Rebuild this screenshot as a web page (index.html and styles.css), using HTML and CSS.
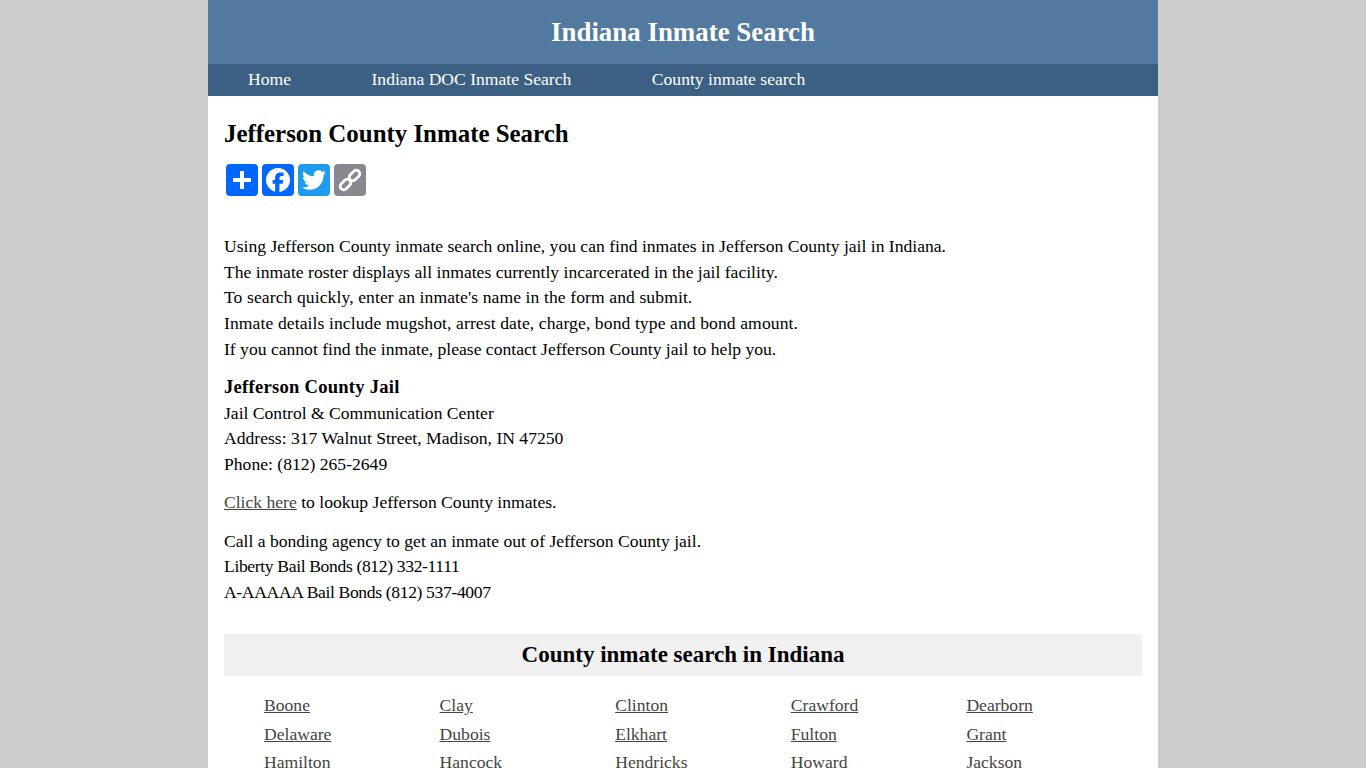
FILE: index.html
```html
<!DOCTYPE html>
<html lang="en">

<head>
  <meta charset="UTF-8" />
  <title>Jefferson County Inmate Search</title>
  <link rel="stylesheet" href="styles.css">
</head>

<body>
  <div class="wrapper">
    <header class="site-title">Indiana Inmate Search</header>
    <nav class="topnav">
      <a href="#">Home</a>
      <a href="#">Indiana DOC Inmate Search</a>
      <a href="#">County inmate search</a>
    </nav>

    <main class="content">
      <h1>Jefferson County Inmate Search</h1>

      <div class="share">
        <a class="share-btn share-add" href="#" title="Share">
          <svg viewBox="0 0 32 32"><path fill="#fff" d="M14 7h4v18h-4z"/><path fill="#fff" d="M7 14h18v4H7z"/></svg>
        </a>
        <a class="share-btn share-fb" href="#" title="Facebook">
          <svg viewBox="0 0 32 32"><path fill="#fff" d="M28 16c0-6.627-5.373-12-12-12S4 9.373 4 16c0 5.628 3.875 10.35 9.101 11.647v-7.98h-2.474V16H13.1v-1.58c0-4.085 1.849-5.978 5.859-5.978.76 0 2.072.15 2.608.298v3.325c-.283-.03-.775-.045-1.386-.045-1.967 0-2.728.745-2.728 2.683V16h3.92l-.673 3.667h-3.247v8.245C23.395 27.195 28 22.135 28 16Z"/></svg>
        </a>
        <a class="share-btn share-tw" href="#" title="Twitter">
          <svg viewBox="0 0 32 32"><path fill="#fff" d="M28 8.557a10 10 0 0 1-2.828.775 4.93 4.93 0 0 0 2.166-2.725 9.7 9.7 0 0 1-3.13 1.194 4.92 4.92 0 0 0-3.593-1.55 4.924 4.924 0 0 0-4.794 6.049c-4.09-.21-7.72-2.17-10.15-5.15a4.94 4.94 0 0 0-.665 2.477c0 1.71.87 3.214 2.19 4.1a5 5 0 0 1-2.23-.616v.06c0 2.39 1.7 4.38 3.952 4.83-.414.115-.85.174-1.297.174q-.476-.001-.928-.086a4.935 4.935 0 0 0 4.6 3.42 9.9 9.9 0 0 1-6.114 2.107q-.597 0-1.175-.068a13.95 13.95 0 0 0 7.55 2.213c9.056 0 14.01-7.507 14.01-14.013q0-.32-.015-.637c.96-.695 1.795-1.56 2.455-2.55z"/></svg>
        </a>
        <a class="share-btn share-link" href="#" title="Copy Link">
          <svg viewBox="0 0 32 32"><g fill="none" stroke="#fff" stroke-width="2.8"><rect x="5.5" y="17" width="12" height="7" rx="3.5" transform="rotate(-45 11.5 20.5)"/><rect x="14.5" y="8" width="12" height="7" rx="3.5" transform="rotate(-45 20.5 11.5)"/></g></svg>
        </a>
      </div>

      <p>
        Using Jefferson County inmate search online, you can find inmates in Jefferson County jail in Indiana.<br>
        The inmate roster displays all inmates currently incarcerated in the jail facility.<br>
        <span class="wide">To search quickly, enter an inmate's name in the form and submit.</span><br>
        <span class="wide">Inmate details include mugshot, arrest date, charge, bond type and bond amount.</span><br>
        If you cannot find the inmate, please contact Jefferson County jail to help you.
      </p>
      <p>
        <strong>Jefferson County Jail</strong><br>
        Jail Control &amp; Communication Center<br>
        Address: 317 Walnut Street, Madison, IN 47250<br>
        Phone: (812) 265-2649
      </p>
      <p><a href="#">Click here</a> to lookup Jefferson County inmates.</p>
      <p>
        Call a bonding agency to get an inmate out of Jefferson County jail.<br>
        <span class="tight">Liberty Bail Bonds (812) 332-1111</span><br>
        <span class="tight">A-AAAAA Bail Bonds (812) 537-4007</span>
      </p>

      <h2 class="panel-title">County inmate search in Indiana</h2>
      <ul class="county-list">
        <li><a href="#">Boone</a></li>
        <li><a href="#">Clay</a></li>
        <li><a href="#">Clinton</a></li>
        <li><a href="#">Crawford</a></li>
        <li><a href="#">Dearborn</a></li>
        <li><a href="#">Delaware</a></li>
        <li><a href="#">Dubois</a></li>
        <li><a href="#">Elkhart</a></li>
        <li><a href="#">Fulton</a></li>
        <li><a href="#">Grant</a></li>
        <li><a href="#">Hamilton</a></li>
        <li><a href="#">Hancock</a></li>
        <li><a href="#">Hendricks</a></li>
        <li><a href="#">Howard</a></li>
        <li><a href="#">Jackson</a></li>
      </ul>
    </main>
  </div>
</body>

</html>
```

FILE: styles.css
```css
* {
  margin: 0;
  padding: 0;
  box-sizing: border-box;
}

html, body {
  background: #ccc;
  font-family: "Liberation Serif", Georgia, serif;
  font-size: 17.6px;
  color: #000;
}

.wrapper {
  width: 950px;
  margin: 0 auto;
  background: #fff;
}

.site-title {
  height: 64px;
  line-height: 64px;
  text-align: center;
  font-size: 26.9px;
  font-weight: bold;
  color: #fff;
  background: #527aa0;
}

.topnav {
  display: flex;
  gap: 80.5px;
  height: 32px;
  padding-left: 40px;
  line-height: 30px;
  background: #3c6083;
}

.topnav a {
  color: #fff;
  text-decoration: none;
}

.content {
  padding: 22px 16px 16px;
}

h1 {
  font-size: 24.9px;
  line-height: 32px;
}

.share {
  display: flex;
  gap: 4px;
  margin: 14px 0 0 2px;
}

.share-btn {
  display: block;
  width: 32px;
  height: 32px;
  border-radius: 4px;
}

.share-btn svg {
  display: block;
  width: 32px;
  height: 32px;
}

.share-add, .share-fb {
  background: #0166ff;
}

.share-tw {
  background: #1d9bf0;
}

.share-link {
  background: #888990;
}

p {
  line-height: 25.6px;
  margin-bottom: 12.8px;
}

.share + p {
  margin-top: 38.3px;
}

strong {
  font-size: 18.6px;
  line-height: 0;
  letter-spacing: 0.25px;
}

.wide {
  letter-spacing: 0.09px;
}

.tight {
  letter-spacing: -0.36px;
}

.content a:not(.share-btn) {
  color: #444;
}

.panel-title {
  margin-top: 28.4px;
  height: 42px;
  line-height: 42px;
  text-align: center;
  font-size: 23px;
  background: #f1f1f1;
}

.county-list {
  display: grid;
  grid-template-columns: repeat(5, 175.6px);
  padding: 15px 0 0 40px;
  list-style: none;
}

.county-list li {
  line-height: 28.8px;
}
```
